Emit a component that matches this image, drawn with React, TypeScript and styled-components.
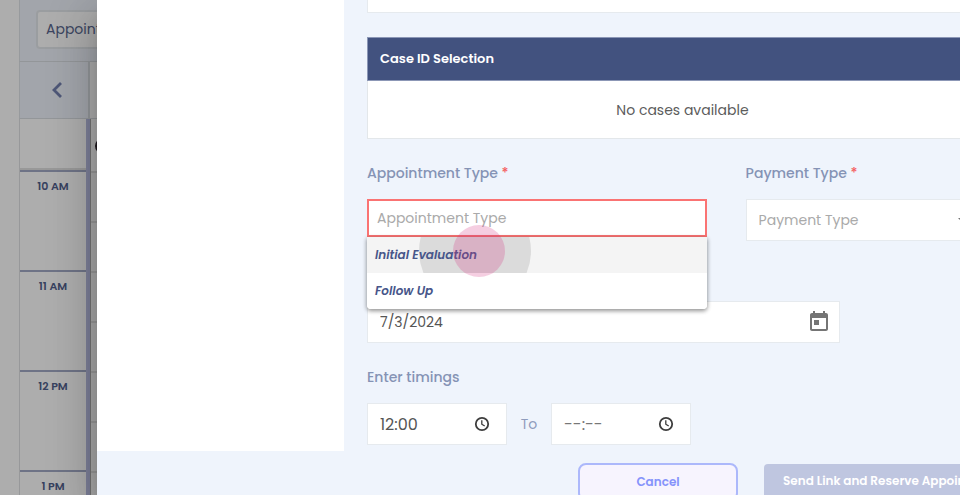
import React, { useState } from "react";
import styled, { createGlobalStyle } from "styled-components";

const GlobalStyle = createGlobalStyle`
  *, *::before, *::after { box-sizing: border-box; }
  body { margin: 0; overflow: hidden; background: #adadad; }
  body, button, input, select { font-family: Poppins, Inter, "Open Sans", sans-serif; }
`;

const Screen = styled.div`
  display: flex;
  height: 100vh;
  overflow: hidden;
`;

/* ---------- calendar behind the dialog ---------- */

const Calendar = styled.aside`
  position: relative;
  display: flex;
  flex-direction: column;
  flex: 0 0 97px;
  padding-left: 19px;
  overflow: hidden;
  background: #fff;
`;

const Backdrop = styled.div`
  position: absolute;
  inset: 0;
  background: rgba(0, 0, 0, 0.32);
`;

const FilterBar = styled.div`
  flex: none;
  height: 62px;
  padding: 10px 0 0 16px;
  background: #eff4fc;
  border-left: 1px solid #dfe3e8;
  border-bottom: 1px solid #d9dde2;
`;

const FilterButton = styled.button`
  width: 160px;
  height: 39px;
  padding: 0 8px;
  border: 2px solid #e4e7ec;
  border-radius: 4px;
  background: #fff;
  color: #5a688f;
  font-size: 14px;
  text-align: left;
`;

const CalendarNav = styled.div`
  flex: none;
  display: grid;
  grid-template-columns: 70px 1fr;
  height: 57px;
  border-left: 1px solid #dfe3e8;
  border-bottom: 1px solid #d9dde2;
`;

const PreviousButton = styled.button`
  display: flex;
  align-items: center;
  justify-content: center;
  padding: 0 0 0 6px;
  border: 0;
  border-right: 2px solid #d9dde2;
  background: #eff4fc;
`;

const CalendarGrid = styled.div`
  flex: none;
  display: grid;
  grid-template-columns: 67px 4px 1fr;
`;

const TimeColumn = styled.div`
  border-left: 1px solid #dfe0e3;
`;

const Divider = styled.div`
  background: #b7bce0;
`;

const DayColumn = styled.div`
  overflow: hidden;
  border-left: 1px solid #aaa;
  background: #f9f9f9;
`;

const HeadCell = styled.div<{ $tall?: boolean }>`
  height: ${(p) => (p.$tall ? 54 : 51)}px;
  padding: 17px 0 0 4px;
  border-bottom: 2px solid #e1e1e1;
  background: #fff;
`;

const Hour = styled.div`
  height: 100px;
  padding-top: 4px;
  border-top: 2px solid #a3aac6;
  color: #51608c;
  font-size: 11px;
  font-weight: 600;
  line-height: 20px;
  text-align: center;
`;

const Slot = styled.div`
  height: 50px;
  border-bottom: 2px solid #e1e1e1;
`;

/* ---------- dialog ---------- */

const Dialog = styled.section`
  position: relative;
  flex: 1 0 auto;
  width: calc(100% - 34px);
  display: flex;
  flex-direction: column;
  background: #eff4fc;
  box-shadow: 0 11px 15px -7px rgba(0, 0, 0, 0.2), 0 24px 38px 3px rgba(0, 0, 0, 0.14),
    0 9px 46px 8px rgba(0, 0, 0, 0.12);
`;

const DialogBody = styled.div`
  display: grid;
  grid-template-columns: 247px 1fr;
`;

const SidePanel = styled.div`
  background: #fff;
`;

const Form = styled.form`
  padding: 0 25px 6px 23px;
`;

const PreviousCard = styled.div`
  height: 13px;
  border: 1px solid #e6eaee;
  border-top: 0;
  background: #fff;
`;

const CaseTable = styled.table`
  width: 100%;
  margin-top: 24px;
  border-collapse: collapse;
  border: 1px solid #e3e7ea;
  background: #fff;

  th {
    height: 43px;
    padding: 0 12px;
    border: 1px solid #8c97b6;
    background: #42527f;
    color: #fff;
    font-size: 13px;
    font-weight: 600;
    text-align: left;
  }

  td {
    height: 58px;
    padding: 2px 0 0;
    color: #5c5c5c;
    font-size: 14px;
    text-align: center;
  }
`;

const TypeRow = styled.div`
  display: grid;
  grid-template-columns: 3fr 2fr;
  padding-top: 22px;
`;

const Field = styled.div<{ $end: number }>`
  position: relative;
  margin-right: ${(p) => p.$end}px;
`;

const Label = styled.label`
  display: block;
  height: 38px;
  color: #8593b5;
  font-size: 14px;
  font-weight: 500;
  line-height: 24px;
`;

const Required = styled.span`
  color: #f55f5f;
`;

const TypeInput = styled.input`
  display: block;
  width: 100%;
  height: 38px;
  padding: 0 8px;
  border: 2px solid #fa7373;
  outline: 0;
  background: #fff;
  font-size: 14px;

  &::placeholder { color: #aaa; opacity: 1; }
`;

const SelectBox = styled.div`
  display: flex;
  align-items: center;
  height: 42px;
  padding-right: 17px;
  border: 1px solid #e6eaee;
  background: #fff;
`;

const PaymentSelect = styled.select`
  flex: 1;
  min-width: 0;
  height: 100%;
  padding: 0 12px;
  appearance: none;
  border: 0;
  background: transparent;
  color: #aaa;
  font-size: 14px;
`;

const Options = styled.ul`
  position: absolute;
  z-index: 2;
  top: 100%;
  left: 0;
  right: 0;
  margin: 0;
  padding: 0;
  list-style: none;
  border-radius: 0 0 4px 4px;
  background: #fff;
  box-shadow: 0 2px 4px rgba(0, 0, 0, 0.3), 0 1px 5px rgba(0, 0, 0, 0.22);
`;

const Option = styled.li<{ $active?: boolean }>`
  position: relative;
  height: 36px;
  padding: 0 8px;
  overflow: hidden;
  border-radius: ${(p) => (p.$active ? "0" : "0 0 4px 4px")};
  background: ${(p) => (p.$active ? "#f4f4f4" : "#fff")};
  color: #47568a;
  font-size: 12px;
  font-style: italic;
  font-weight: 600;
  line-height: 36px;
`;

const OptionText = styled.span`
  position: relative;
`;

const Ripple = styled.span`
  position: absolute;
  top: -42px;
  left: 52px;
  width: 112px;
  height: 112px;
  border-radius: 50%;
  background: #dbdbdb;
`;

const Pointer = styled.span`
  position: absolute;
  top: -12px;
  left: 86px;
  width: 52px;
  height: 52px;
  border-radius: 50%;
  background: rgba(215, 50, 130, 0.24);
  pointer-events: none;
`;

const ComboArea = styled.div`
  position: relative;
`;

const InputBox = styled.div<{ $wide?: boolean }>`
  display: flex;
  align-items: center;
  width: ${(p) => (p.$wide ? "75%" : "140px")};
  height: 42px;
  padding-right: ${(p) => (p.$wide ? 8 : 16)}px;
  border: 1px solid #e6eaee;
  background: #fff;
`;

const DateSection = styled.div`
  padding-top: 60px;
`;

const PlainInput = styled.input<{ $large?: boolean }>`
  flex: 1;
  min-width: 0;
  height: 100%;
  padding: 0 12px;
  border: 0;
  outline: 0;
  background: transparent;
  color: #555;
  font-size: ${(p) => (p.$large ? 16 : 14)}px;

  &::placeholder { color: #777; opacity: 1; }
`;

const IconButton = styled.button`
  display: flex;
  padding: 0;
  border: 0;
  background: transparent;
`;

const Timings = styled.fieldset`
  min-width: 0;
  margin: 0;
  padding: 22px 0 0;
  border: 0;
`;

const TimingsTitle = styled.legend`
  float: left;
  width: 100%;
  height: 38px;
  padding: 0;
  color: #8593b5;
  font-size: 14px;
  font-weight: 500;
  line-height: 24px;
`;

const TimeRow = styled.div`
  clear: both;
  display: flex;
  align-items: center;
`;

const To = styled.span`
  width: 44px;
  color: #8f9cbd;
  font-size: 14px;
  text-align: center;
`;

const Footer = styled.footer`
  display: flex;
  justify-content: flex-end;
  gap: 26px;
  padding: 12px 13px 12px 0;
`;

const CancelButton = styled.button`
  width: 160px;
  height: 38px;
  border: 2px solid #acb8fb;
  border-radius: 8px;
  background: #f7f4fe;
  color: #8593fb;
  font-size: 12px;
  font-weight: 600;
`;

const SendButton = styled.button`
  width: 246px;
  height: 38px;
  margin-top: 1px;
  padding: 0 0 4px 19px;
  border: 0;
  border-radius: 4px;
  background: #bfc6e0;
  color: #fff;
  font-size: 12px;
  font-weight: 600;
  text-align: left;
  white-space: nowrap;
`;

const ClockIcon = () => (
  <svg width="16" height="16" viewBox="0 0 16 16" fill="none" stroke="#3d3d3d" aria-hidden="true">
    <circle cx="8" cy="8" r="6.2" strokeWidth="1.8" />
    <path d="M7.8 4.3V8.2L10.7 10" strokeWidth="1.3" />
  </svg>
);

const CalendarIcon = () => (
  <svg width="24" height="24" viewBox="0 0 24 24" fill="#757575" aria-hidden="true">
    <path d="M19 3h-1V1h-2v2H8V1H6v2H5c-1.110 0-1.990.9-1.990 2L3 19c0 1.100.89 2 2 2h14c1.100 0 2-.9 2-2V5c0-1.100-.9-2-2-2zm0 16H5V8h14v11zM7 10h5v5H7z" />
  </svg>
);

const hours = ["10 AM", "11 AM", "12 PM", "1 PM"];
const slots = [0, 1, 2, 3, 4, 5, 6];

interface TimeFieldProps {
  label: string;
  initial: string;
}

const TimeField = ({ label, initial }: TimeFieldProps) => {
  const [value, setValue] = useState(initial);
  return (
    <InputBox>
      <PlainInput
        $large
        aria-label={label}
        value={value}
        placeholder="--:--"
        onChange={(e) => setValue(e.target.value)}
      />
      <IconButton type="button" aria-label={`Pick ${label.toLowerCase()}`}>
        <ClockIcon />
      </IconButton>
    </InputBox>
  );
};

export default function App() {
  return (
    <>
      <GlobalStyle />
      <Screen>
        <Calendar>
          <FilterBar>
            <FilterButton type="button">Appointments</FilterButton>
          </FilterBar>
          <CalendarNav>
            <PreviousButton type="button" aria-label="Previous">
              <svg width="12" height="18" viewBox="0 0 12 18" fill="none" stroke="#7381b0" strokeWidth="2.8">
                <path d="M10 2 3 9l7 7" />
              </svg>
            </PreviousButton>
          </CalendarNav>
          <CalendarGrid>
            <TimeColumn>
              <HeadCell />
              {hours.map((hour) => (
                <Hour key={hour}>{hour}</Hour>
              ))}
            </TimeColumn>
            <Divider />
            <DayColumn>
              <HeadCell $tall>
                <svg width="16" height="16" viewBox="0 0 16 16" aria-hidden="true">
                  <circle cx="8" cy="8" r="8" fill="#302630" />
                </svg>
              </HeadCell>
              {slots.map((slot) => (
                <Slot key={slot} />
              ))}
            </DayColumn>
          </CalendarGrid>
          <Backdrop />
        </Calendar>

        <Dialog role="dialog" aria-label="New appointment">
          <DialogBody>
            <SidePanel />
            <Form>
              <PreviousCard />
              <CaseTable>
                <thead>
                  <tr>
                    <th>Case ID Selection</th>
                  </tr>
                </thead>
                <tbody>
                  <tr>
                    <td>No cases available</td>
                  </tr>
                </tbody>
              </CaseTable>

              <TypeRow>
                <Field $end={39}>
                  <Label htmlFor="appointment-type">
                    Appointment Type <Required>*</Required>
                  </Label>
                  <ComboArea>
                    <TypeInput
                      id="appointment-type"
                      role="combobox"
                      aria-expanded="true"
                      aria-controls="appointment-options"
                      placeholder="Appointment Type"
                    />
                    <Options id="appointment-options" role="listbox">
                      <Option $active role="option" aria-selected="true">
                        <Ripple />
                        <OptionText>Initial Evaluation</OptionText>
                      </Option>
                      <Option role="option" aria-selected="false">
                        <OptionText>Follow Up</OptionText>
                      </Option>
                      <Pointer />
                    </Options>
                  </ComboArea>
                </Field>
                <Field $end={12}>
                  <Label htmlFor="payment-type">
                    Payment Type <Required>*</Required>
                  </Label>
                  <SelectBox>
                    <PaymentSelect id="payment-type">
                      <option>Payment Type</option>
                    </PaymentSelect>
                    <svg width="10" height="5" viewBox="0 0 10 5" fill="#757575" aria-hidden="true">
                      <path d="M0 0h10L5 5z" />
                    </svg>
                  </SelectBox>
                </Field>
              </TypeRow>

              <DateSection>
                <InputBox $wide>
                  <PlainInput aria-label="Date" defaultValue="7/3/2024" />
                  <IconButton type="button" aria-label="Open calendar">
                    <CalendarIcon />
                  </IconButton>
                </InputBox>
              </DateSection>

              <Timings>
                <TimingsTitle>Enter timings</TimingsTitle>
                <TimeRow>
                  <TimeField label="Start time" initial="12:00" />
                  <To>To</To>
                  <TimeField label="End time" initial="" />
                </TimeRow>
              </Timings>
            </Form>
          </DialogBody>
          <Footer>
            <CancelButton type="button">Cancel</CancelButton>
            <SendButton type="button">Send Link and Reserve Appointment</SendButton>
          </Footer>
        </Dialog>
      </Screen>
    </>
  );
}
